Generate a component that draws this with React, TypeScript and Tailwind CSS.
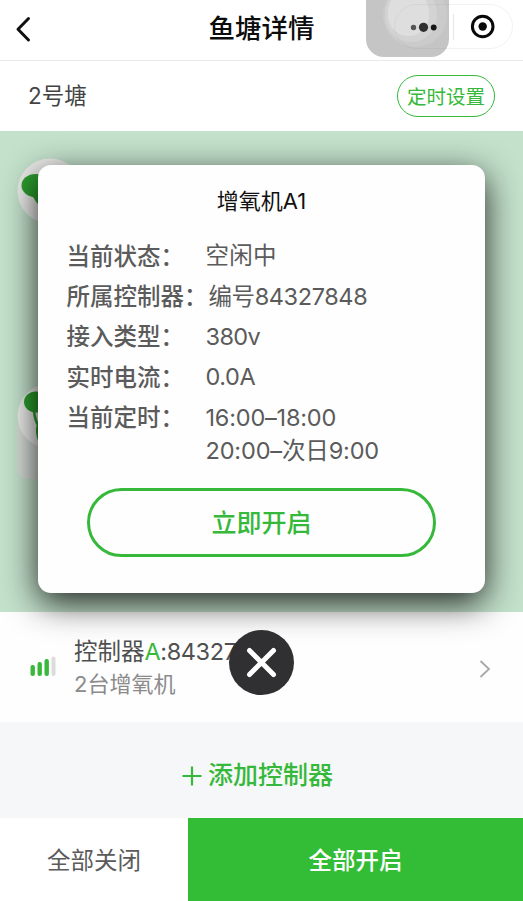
import React from "react";

const rows = [
  { label: "当前状态", value: "空闲中", tracking: "tracking-[0.3px]" },
  { label: "所属控制器", value: "编号84327848", wide: true, tracking: "tracking-[-0.4px]" },
  { label: "接入类型", value: "380v", tracking: "tracking-[-0.6px]" },
  { label: "实时电流", value: "0.0A", tracking: "tracking-[-0.4px]" },
  { label: "当前定时", value: "16:00–18:00", tracking: "tracking-[-0.2px]" },
];

function Header() {
  return (
    <header className="relative flex h-[61px] items-center justify-center border-b border-[#e9e9e9] bg-white pb-[5px]">
      <svg className="absolute left-[15px] top-[15px]" width="18" height="28" viewBox="0 0 18 28" fill="none" stroke="#111" strokeWidth="3" strokeLinecap="round" strokeLinejoin="round">
        <path d="M13.5 3.5 L3 14.2 L13.5 25" />
      </svg>
      <h1 className="text-[26.5px] font-medium leading-[30px] text-[#0c0c0c]">鱼塘详情</h1>
      <div className="absolute left-[366px] top-0 h-[57px] w-[83px] overflow-hidden rounded-b-[18px] bg-[#c5c5c5]">
        <div className="absolute left-[17px] top-[-17px] h-[64px] w-[64px] rounded-full bg-[#cbcbcb]" />
        <div className="absolute left-[19px] top-[-13px] h-[55px] w-[52px] rounded-full bg-[#d3d3d3]" />
        <div className="absolute left-[22px] top-[-9px] h-[45px] w-[41px] rounded-full bg-[#dedede]" />
      </div>
      <div className="absolute left-[394px] top-[4px] h-[45px] w-[119px] rounded-full border border-[#8888881c]" />
      <svg className="absolute left-[394px] top-0" width="125" height="56" viewBox="394 0 125 56">
        <circle cx="413.5" cy="27.5" r="2.7" fill="#555" />
        <circle cx="423.5" cy="27.3" r="4.6" fill="#2f2f2f" />
        <circle cx="433.7" cy="27.5" r="2.9" fill="#151515" />
        <path d="M453.5 14V40" stroke="#e9e9e9" strokeWidth="1.3" />
        <circle cx="482.7" cy="26.5" r="10.3" fill="none" stroke="#090909" strokeWidth="3" />
        <circle cx="482.7" cy="26.5" r="4.2" fill="#090909" />
      </svg>
    </header>
  );
}

function Aerator({ className, tilt }: { className: string; tilt?: boolean }) {
  return (
    <div className={className}>
      <svg width="66" height="66" viewBox="0 0 66 66">
        <circle cx="33" cy="33" r="32.5" fill="#ebebe9" />
        {tilt ? (
          <g fill="#2c9e2d">
            <ellipse cx="19" cy="19" rx="12" ry="10.5" />
            <path d="M17 28Q18 37 21 42Q19 48 22 57" fill="none" stroke="#2c9e2d" strokeWidth="2.5" />
          </g>
        ) : (
          <g fill="#2c9e2d">
            <ellipse cx="18.500" cy="27.500" rx="14" ry="11.500" />
            <path d="M14 37H22V47C18 44 18 40 14 37Z" />
          </g>
        )}
      </svg>
    </div>
  );
}

function Modal() {
  return (
    <section className="absolute left-[38px] top-[165px] z-10 flex h-[428px] w-[447px] flex-col rounded-[13px] bg-[#fefefe] shadow-[0_10px_34px_rgba(0,0,0,0.84)]">
      <h2 className="mt-[20px] text-center text-[22px] leading-[32px] text-[#111]">增氧机A1</h2>
      <dl className="mt-[19px] pl-[28.5px] text-[23.5px] text-[#5b5b5b]">
        {rows.map((r) => (
          <div key={r.label} className="flex h-[40.4px] items-center whitespace-nowrap leading-[40px]">
            <dt className={r.wide ? "flex w-[142px] pt-px font-medium" : "flex w-[139px] pt-px font-medium"}>
              <span>{r.label}</span>
              <span>：</span>
            </dt>
            <dd className={r.tracking}>{r.value}</dd>
          </div>
        ))}
        <dd className="-mt-px pl-[139px] leading-[28px] tracking-[-0.15px]">20:00–次日9:00</dd>
      </dl>
      <button className="ml-[49px] mt-[23px] h-[69px] w-[349px] rounded-full border-[3px] border-[#36b83a] pt-[3px] text-[25px] font-medium text-[#36b83a]">立即开启</button>
    </section>
  );
}

export default function App() {
  return (
    <main className="relative flex h-[901px] w-[523px] flex-col overflow-hidden bg-white font-['Inter','Noto_Sans_CJK_SC',sans-serif]">
      <Header />
      <div className="flex h-[70px] items-center justify-between pl-[28px] pr-[28px]">
        <span className="text-[22.5px] text-[#444]">2号塘</span>
        <button className="h-[42px] w-[98px] rounded-full border-[1.5px] border-[#36b83a] pt-[3px] text-[19.5px] text-[#36b83a]">定时设置</button>
      </div>
      <div className="relative h-[481px] bg-[#c3e1cb]">
        <Aerator className="absolute left-[17px] top-[27px]" />
        <div className="absolute left-[17px] top-[286px] h-[62px] w-[60px] rounded-[10px] bg-[#d5dbd6]" />
        <Aerator className="absolute left-[17px] top-[252px]" tilt />
      </div>
      <Modal />
      <div className="flex h-[110px] items-center bg-[#fefefe]">
        <svg className="ml-[29px]" width="28" height="22" viewBox="0 0 28 22">
          <rect x="1.5" y="9" width="4.4" height="11" rx="2" fill="#38b83c" />
          <rect x="8.5" y="6" width="4.4" height="14" rx="2" fill="#38b83c" />
          <rect x="15.5" y="3" width="4.4" height="17" rx="2" fill="#38b83c" />
          <rect x="22.5" y="0.5" width="4" height="19.5" rx="2" fill="#dcdcdc" />
        </svg>
        <div className="ml-[17px] flex-1 whitespace-nowrap">
          <div className="text-[23.5px] leading-[33px] text-[#505050]">
            控制器<span className="tracking-[-0.4px]"><span className="text-[#36b83a]">A</span>:84327848</span>
          </div>
          <div className="text-[22px] leading-[32px] text-[#8b8b8b]">2台增氧机</div>
        </div>
        <svg className="relative top-[2px] mr-[32px]" width="12" height="20" viewBox="0 0 12 20" fill="none" stroke="#a8a8a8" strokeWidth="1.8">
          <path d="M1.5 2L10 10L1.5 18" />
        </svg>
      </div>
      <button aria-label="关闭" className="absolute left-[229px] top-[630px] z-20 h-[65px] w-[65px] rounded-full bg-[#303032]">
        <svg width="65" height="65" viewBox="0 0 65 65" stroke="#fff" strokeWidth="5" strokeLinecap="round">
          <path d="M20.5 20.5L44.5 44.5M44.5 20.5L20.5 44.5" />
        </svg>
      </button>
      <div className="flex h-[96px] items-center justify-center gap-[6px] bg-[#f5f7f9] pt-[11px] pr-[8px] text-[25px] font-medium text-[#36b83a]">
        <svg width="20" height="20" viewBox="0 0 20 20" stroke="#36b83a" strokeWidth="2.2">
          <path d="M0.5 10H19.5M10 0.5V19.5" />
        </svg>
        <span>添加控制器</span>
      </div>
      <footer className="flex h-[83px]">
        <button className="w-[188px] pt-[2px] text-[23.5px] text-[#5b5b5b]">全部关闭</button>
        <button className="flex-1 bg-[#33bc36] pt-[2px] text-[23.5px] font-medium text-white">全部开启</button>
      </footer>
    </main>
  );
}
